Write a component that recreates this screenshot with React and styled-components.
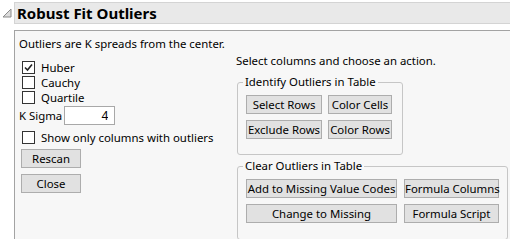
import styled, { createGlobalStyle } from 'styled-components';

const GlobalStyle = createGlobalStyle`
  body {
    margin: 0;
    background: #ffffff;
    font-family: "Noto Sans", "Open Sans", sans-serif;
    font-size: 11.4px;
    color: #000;
  }
`;

const CheckBox = ({ label, checked }) => (
  <CheckRow>
    <Box>
      {checked && (
        <svg width="11" height="11" viewBox="0 0 11 11">
          <path d="M2 5.5 L4.5 8 L9 2.5" fill="none" stroke="#222" strokeWidth="1.6" />
        </svg>
      )}
    </Box>
    <span>{label}</span>
  </CheckRow>
);

const App = () => {
  return (
    <>
      <GlobalStyle />
      <Page>
        <HeaderRow>
          <Disclosure>
            <svg width="10" height="10" viewBox="0 0 10 10">
              <polygon points="9,1 9,9 1,9" fill="#dcdcdc" stroke="#8a8a8a" strokeWidth="1" />
            </svg>
          </Disclosure>
          <TitleBar>Robust Fit Outliers</TitleBar>
        </HeaderRow>
        <Panel>
          <LeftColumn>
            <Intro>Outliers are K spreads from the center.</Intro>
            <CheckList>
              <CheckBox label="Huber" checked />
              <CheckBox label="Cauchy" />
              <CheckBox label="Quartile" />
            </CheckList>
            <SigmaRow>
              <span>K Sigma</span>
              <SigmaInput defaultValue="4" />
            </SigmaRow>
            <ShowOnly>
              <CheckBox label="Show only columns with outliers" />
            </ShowOnly>
            <SideButtons>
              <Button $w={60}>Rescan</Button>
              <Button $w={60}>Close</Button>
            </SideButtons>
          </LeftColumn>
          <RightColumn>
            <Intro>Select columns and choose an action.</Intro>
            <Group $mt={6} $pr={10} $pb={15}>
              <Legend>Identify Outliers in Table</Legend>
              <ButtonGrid $cols="76px 64px" $gap={6}>
                <Button>Select Rows</Button>
                <Button>Color Cells</Button>
                <Button>Exclude Rows</Button>
                <Button>Color Rows</Button>
              </ButtonGrid>
            </Group>
            <Group $mt={4} $pr={8} $pb={16}>
              <Legend>Clear Outliers in Table</Legend>
              <ButtonGrid $cols="151px 95px" $gap={7}>
                <Button>Add to Missing Value Codes</Button>
                <Button>Formula Columns</Button>
                <Button>Change to Missing</Button>
                <Button>Formula Script</Button>
              </ButtonGrid>
            </Group>
          </RightColumn>
        </Panel>
      </Page>
    </>
  );
};

const Page = styled.div`
  width: 510px;
  height: 239px;
  padding-top: 2px;
  box-sizing: border-box;
  display: flex;
  flex-direction: column;
  overflow: hidden;
`;

const HeaderRow = styled.div`
  display: flex;
  height: 22px;
`;

const Disclosure = styled.div`
  width: 14px;
  display: flex;
  align-items: center;
  justify-content: center;
`;

const TitleBar = styled.div`
  flex: 1;
  background: #e9e9e9;
  border-top: 1px solid #d4d4d4;
  border-bottom: 1px solid #d4d4d4;
  border-left: 1px solid #d4d4d4;
  font-size: 15px;
  font-weight: bold;
  line-height: 20px;
  padding-left: 2px;
`;

const Panel = styled.div`
  flex: 1;
  margin: 6px 0 0 14px;
  border-top: 1px solid #a3a3a3;
  border-left: 1px solid #a3a3a3;
  background: #f7f7f7;
  display: flex;
  padding: 5px 0 0 4px;
`;

const LeftColumn = styled.div`
  width: 217px;
  display: flex;
  flex-direction: column;
`;

const RightColumn = styled.div`
  flex: 1;
  padding-top: 17px;
  display: flex;
  flex-direction: column;
  align-items: flex-start;
`;

const Intro = styled.div`
  line-height: 16px;
  white-space: nowrap;
`;

const CheckList = styled.div`
  margin-top: 8px;
  display: flex;
  flex-direction: column;
`;

const CheckRow = styled.div`
  display: flex;
  align-items: center;
  height: 15px;
  line-height: 15px;
  padding-left: 3px;
  gap: 6px;
  white-space: nowrap;
`;

const Box = styled.div`
  width: 11px;
  height: 11px;
  border: 1px solid #333;
  background: #fff;
  display: flex;
  align-items: center;
  justify-content: center;
`;

const SigmaRow = styled.div`
  display: flex;
  align-items: center;
  gap: 2px;
  margin-top: 1px;
  height: 19px;
`;

const SigmaInput = styled.input`
  width: 51px;
  height: 19px;
  box-sizing: border-box;
  border: 1px solid #a8a8a8;
  background: #fff;
  font: inherit;
  font-size: 12px;
  text-align: right;
  padding: 0 6px 0 0;
`;

const ShowOnly = styled.div`
  margin-top: 5px;
`;

const SideButtons = styled.div`
  margin: 4px 0 0 2px;
  display: flex;
  flex-direction: column;
  gap: 6px;
`;

const Button = styled.button`
  width: ${(p) => (p.$w ? `${p.$w}px` : 'auto')};
  height: 19px;
  box-sizing: border-box;
  padding: 0;
  background: #e1e1e1;
  border: 1px solid #adadad;
  border-radius: 0;
  font: inherit;
  color: #000;
  white-space: nowrap;
  line-height: 17px;
`;

const Group = styled.fieldset`
  margin: ${(p) => p.$mt}px 0 0 1px;
  padding: 6px ${(p) => p.$pr}px ${(p) => p.$pb}px 8px;
  border: 1px solid #c6c6c6;
  border-radius: 3px;
  min-width: 0;
`;

const Legend = styled.legend`
  padding: 0 2px;
  margin-left: -3px;
  line-height: 14px;
  white-space: nowrap;
`;

const ButtonGrid = styled.div`
  display: grid;
  grid-template-columns: ${(p) => p.$cols};
  column-gap: ${(p) => p.$gap}px;
  row-gap: 6px;
`;

export default App;
